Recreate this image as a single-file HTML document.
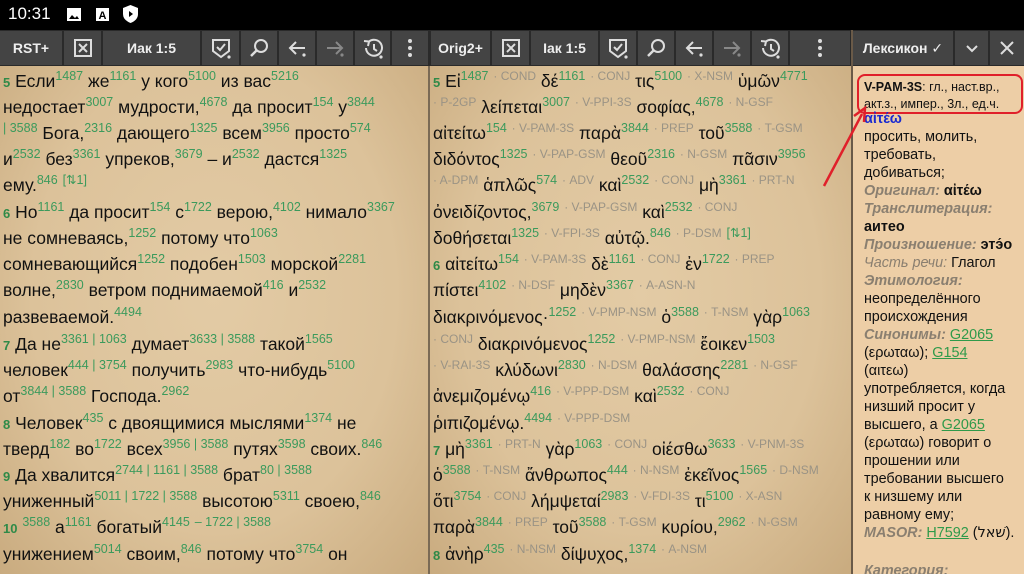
<!DOCTYPE html>
<html><head><meta charset="utf-8">
<style>
*{margin:0;padding:0;box-sizing:border-box}
body{width:1024px;height:574px;overflow:hidden;background:#000;font-family:"Liberation Sans","DejaVu Sans",sans-serif;position:relative}
#status{position:absolute;left:0;top:0;width:1024px;height:30px;background:#000;color:#fff;font-size:17px}
#tb{position:absolute;left:0;top:30px;width:1024px;height:36px;background:#2a2a2a}
.bt{position:absolute;top:1px;height:34px;background:#444;color:#eee;font-weight:bold;font-size:14px;display:flex;align-items:center;justify-content:center}
.bt svg{width:24px;height:24px}
.pane{position:absolute;top:66px;height:508px;overflow:hidden}
#lp{left:0;width:428px;background:radial-gradient(ellipse at 50% 45%,#e3cba5 0%,#dcc29a 60%,#c9ab7f 100%)}
#mp{left:430px;width:421px;background:radial-gradient(ellipse at 50% 45%,#e3cba5 0%,#dcc29a 60%,#c9ab7f 100%)}
#div1{position:absolute;left:428px;top:66px;width:2px;height:508px;background:#7a6a55}
#div2{position:absolute;left:851px;top:30px;width:2px;height:544px;background:#6a5a48}
#rp{left:853px;width:171px;background:#edcea6;color:#111;font-size:14.4px;line-height:18px;padding-left:11px}
.ln{position:absolute;left:3px;white-space:nowrap;font-size:17.5px;color:#111;height:26px;line-height:28px}
#mp .ln{font-size:17.5px;left:3px}
sup{font-size:12.5px;color:#3b9a5c;vertical-align:7px;line-height:0}
#mp sup{font-size:12.5px}
b.v{color:#2f8a48;font-size:13px;font-weight:bold}
em{font-style:normal;color:#9a9385;font-size:12px;vertical-align:7px;line-height:0}
.rl{position:absolute;left:11px;white-space:nowrap}
.g{color:#8a7f70;font-style:italic;font-weight:bold}
.lk{color:#2f9a4a;text-decoration:underline}
</style></head><body>
<div id="status">
<span style="position:absolute;left:8px;top:4px">10:31</span>
<svg style="position:absolute;left:67px;top:8px" width="14" height="13"><rect x="0" y="0" width="14" height="13" fill="#fff"/><path d="M2 11 L5 7 L8 10 L10 8 L12 11Z" fill="#000"/></svg>
<svg style="position:absolute;left:96px;top:8px" width="13" height="13"><rect x="0" y="0" width="13" height="13" fill="#fff"/><text x="6.5" y="11" font-size="11" text-anchor="middle" font-weight="bold" fill="#000" font-family="Liberation Sans">A</text></svg>
<svg style="position:absolute;left:123px;top:5px" width="15" height="18"><path d="M7.5 0 L15 3 L15 9 Q15 15 7.5 18 Q0 15 0 9 L0 3Z" fill="#fff"/><path d="M6 6 L10 9 L6 12Z" fill="#000"/></svg>
</div>
<div id="tb">
<div class="bt" style="left:0;width:62px">RST+</div>
<div class="bt" style="left:64px;width:37px"><svg viewBox="0 0 24 24"><rect x="4" y="4" width="16" height="16" fill="none" stroke="#ddd" stroke-width="2"/><path d="M8 8L16 16M16 8L8 16" stroke="#ddd" stroke-width="2"/></svg></div>
<div class="bt" style="left:103px;width:97px">Иак 1:5</div>
<div class="bt" style="left:202px;width:37px"><svg viewBox="0 0 24 24"><path d="M4 4H20V15L12 21L4 15Z" fill="none" stroke="#ddd" stroke-width="2"/><path d="M8 11L11 14L16 8" fill="none" stroke="#ddd" stroke-width="2"/><circle cx="20" cy="21" r="1.6" fill="#ddd"/></svg></div>
<div class="bt" style="left:241px;width:36px"><svg viewBox="0 0 24 24"><circle cx="14" cy="10" r="6" fill="none" stroke="#ddd" stroke-width="2"/><path d="M9.5 14.5L4 20" stroke="#ddd" stroke-width="2.5"/></svg></div>
<div class="bt" style="left:279px;width:36px"><svg viewBox="0 0 24 24"><path d="M20 12H5M11 6L5 12L11 18" fill="none" stroke="#ddd" stroke-width="2"/><circle cx="19" cy="19" r="1.6" fill="#ddd"/></svg></div>
<div class="bt" style="left:317px;width:36px"><svg viewBox="0 0 24 24"><path d="M4 12H19M13 6L19 12L13 18" fill="none" stroke="#888" stroke-width="2"/><circle cx="19" cy="19" r="1.6" fill="#888"/></svg></div>
<div class="bt" style="left:355px;width:35px"><svg viewBox="0 0 24 24"><path d="M5 12A8 8 0 1 0 8 5.5" fill="none" stroke="#ddd" stroke-width="2"/><path d="M3 5L8 5.5L7 10" fill="none" stroke="#ddd" stroke-width="2"/><path d="M13 8V13L16 15" fill="none" stroke="#ddd" stroke-width="2"/><circle cx="20" cy="21" r="1.6" fill="#ddd"/></svg></div>
<div class="bt" style="left:392px;width:36px"><svg viewBox="0 0 24 24"><circle cx="12" cy="5" r="2" fill="#ddd"/><circle cx="12" cy="12" r="2" fill="#ddd"/><circle cx="12" cy="19" r="2" fill="#ddd"/></svg></div>
<div class="bt" style="left:431px;width:59px">Orig2+</div>
<div class="bt" style="left:492px;width:37px"><svg viewBox="0 0 24 24"><rect x="4" y="4" width="16" height="16" fill="none" stroke="#ddd" stroke-width="2"/><path d="M8 8L16 16M16 8L8 16" stroke="#ddd" stroke-width="2"/></svg></div>
<div class="bt" style="left:531px;width:67px">Іак 1:5</div>
<div class="bt" style="left:600px;width:36px"><svg viewBox="0 0 24 24"><path d="M4 4H20V15L12 21L4 15Z" fill="none" stroke="#ddd" stroke-width="2"/><path d="M8 11L11 14L16 8" fill="none" stroke="#ddd" stroke-width="2"/><circle cx="20" cy="21" r="1.6" fill="#ddd"/></svg></div>
<div class="bt" style="left:638px;width:36px"><svg viewBox="0 0 24 24"><circle cx="14" cy="10" r="6" fill="none" stroke="#ddd" stroke-width="2"/><path d="M9.5 14.5L4 20" stroke="#ddd" stroke-width="2.5"/></svg></div>
<div class="bt" style="left:676px;width:36px"><svg viewBox="0 0 24 24"><path d="M20 12H5M11 6L5 12L11 18" fill="none" stroke="#ddd" stroke-width="2"/><circle cx="19" cy="19" r="1.6" fill="#ddd"/></svg></div>
<div class="bt" style="left:714px;width:36px"><svg viewBox="0 0 24 24"><path d="M4 12H19M13 6L19 12L13 18" fill="none" stroke="#888" stroke-width="2"/><circle cx="19" cy="19" r="1.6" fill="#888"/></svg></div>
<div class="bt" style="left:752px;width:36px"><svg viewBox="0 0 24 24"><path d="M5 12A8 8 0 1 0 8 5.5" fill="none" stroke="#ddd" stroke-width="2"/><path d="M3 5L8 5.5L7 10" fill="none" stroke="#ddd" stroke-width="2"/><path d="M13 8V13L16 15" fill="none" stroke="#ddd" stroke-width="2"/><circle cx="20" cy="21" r="1.6" fill="#ddd"/></svg></div>
<div class="bt" style="left:790px;width:60px"><svg viewBox="0 0 24 24"><circle cx="12" cy="5" r="2" fill="#ddd"/><circle cx="12" cy="12" r="2" fill="#ddd"/><circle cx="12" cy="19" r="2" fill="#ddd"/></svg></div>
<div class="bt" style="left:853px;width:100px">Лексикон ✓</div>
<div class="bt" style="left:955px;width:33px"><svg viewBox="0 0 24 24"><path d="M7 10L12 15L17 10" fill="none" stroke="#ddd" stroke-width="2"/></svg></div>
<div class="bt" style="left:990px;width:34px"><svg viewBox="0 0 24 24"><path d="M6 6L18 18M18 6L6 18" stroke="#ddd" stroke-width="2"/></svg></div>
</div>

<div id="lp" class="pane">
<div class="ln" style="top:1px"><b class="v">5</b> Если<sup>1487</sup> же<sup>1161</sup> у кого<sup>5100</sup> из вас<sup>5216</sup></div>
<div class="ln" style="top:27px">недостает<sup>3007</sup> мудрости,<sup>4678</sup> да просит<sup>154</sup> у<sup>3844</sup></div>
<div class="ln" style="top:53px"><sup>| 3588</sup> Бога,<sup>2316</sup> дающего<sup>1325</sup> всем<sup>3956</sup> просто<sup>574</sup></div>
<div class="ln" style="top:79px">и<sup>2532</sup> без<sup>3361</sup> упреков,<sup>3679</sup> – и<sup>2532</sup> дастся<sup>1325</sup></div>
<div class="ln" style="top:105px">ему.<sup>846</sup> <sup>[⇅1]</sup></div>
<div class="ln" style="top:132px"><b class="v">6</b> Но<sup>1161</sup> да просит<sup>154</sup> с<sup>1722</sup> верою,<sup>4102</sup> нимало<sup>3367</sup></div>
<div class="ln" style="top:158px">не сомневаясь,<sup>1252</sup> потому что<sup>1063</sup></div>
<div class="ln" style="top:184px">сомневающийся<sup>1252</sup> подобен<sup>1503</sup> морской<sup>2281</sup></div>
<div class="ln" style="top:210px">волне,<sup>2830</sup> ветром поднимаемой<sup>416</sup> и<sup>2532</sup></div>
<div class="ln" style="top:237px">развеваемой.<sup>4494</sup></div>
<div class="ln" style="top:264px"><b class="v">7</b> Да не<sup>3361 | 1063</sup> думает<sup>3633 | 3588</sup> такой<sup>1565</sup></div>
<div class="ln" style="top:290px">человек<sup>444 | 3754</sup> получить<sup>2983</sup> что-нибудь<sup>5100</sup></div>
<div class="ln" style="top:316px">от<sup>3844 | 3588</sup> Господа.<sup>2962</sup></div>
<div class="ln" style="top:343px"><b class="v">8</b> Человек<sup>435</sup> с двоящимися мыслями<sup>1374</sup> не</div>
<div class="ln" style="top:369px">тверд<sup>182</sup> во<sup>1722</sup> всех<sup>3956 | 3588</sup> путях<sup>3598</sup> своих.<sup>846</sup></div>
<div class="ln" style="top:395px"><b class="v">9</b> Да хвалится<sup>2744 | 1161 | 3588</sup> брат<sup>80 | 3588</sup></div>
<div class="ln" style="top:421px">униженный<sup>5011 | 1722 | 3588</sup> высотою<sup>5311</sup> своею,<sup>846</sup></div>
<div class="ln" style="top:447px"><b class="v">10</b> <sup>3588</sup> а<sup>1161</sup> богатый<sup>4145</sup> <sup>– 1722 | 3588</sup></div>
<div class="ln" style="top:474px">унижением<sup>5014</sup> своим,<sup>846</sup> потому что<sup>3754</sup> он</div>
</div>
<div id="div1"></div>
<div id="mp" class="pane">
<div class="ln" style="top:1px"><b class="v">5</b> Εἰ<sup>1487</sup> <em>· COND</em> δέ<sup>1161</sup> <em>· CONJ</em> τις<sup>5100</sup> <em>· X-NSM</em> ὑμῶν<sup>4771</sup></div>
<div class="ln" style="top:27px"><em>· P-2GP</em> λείπεται<sup>3007</sup> <em>· V-PPI-3S</em> σοφίας,<sup>4678</sup> <em>· N-GSF</em></div>
<div class="ln" style="top:53px">αἰτείτω<sup>154</sup> <em>· V-PAM-3S</em> παρὰ<sup>3844</sup> <em>· PREP</em> τοῦ<sup>3588</sup> <em>· T-GSM</em></div>
<div class="ln" style="top:79px">διδόντος<sup>1325</sup> <em>· V-PAP-GSM</em> θεοῦ<sup>2316</sup> <em>· N-GSM</em> πᾶσιν<sup>3956</sup></div>
<div class="ln" style="top:105px"><em>· A-DPM</em> ἁπλῶς<sup>574</sup> <em>· ADV</em> καὶ<sup>2532</sup> <em>· CONJ</em> μὴ<sup>3361</sup> <em>· PRT-N</em></div>
<div class="ln" style="top:132px">ὀνειδίζοντος,<sup>3679</sup> <em>· V-PAP-GSM</em> καὶ<sup>2532</sup> <em>· CONJ</em></div>
<div class="ln" style="top:158px">δοθήσεται<sup>1325</sup> <em>· V-FPI-3S</em> αὐτῷ.<sup>846</sup> <em>· P-DSM</em> <sup>[⇅1]</sup></div>
<div class="ln" style="top:184px"><b class="v">6</b> αἰτείτω<sup>154</sup> <em>· V-PAM-3S</em> δὲ<sup>1161</sup> <em>· CONJ</em> ἐν<sup>1722</sup> <em>· PREP</em></div>
<div class="ln" style="top:210px">πίστει<sup>4102</sup> <em>· N-DSF</em> μηδὲν<sup>3367</sup> <em>· A-ASN-N</em></div>
<div class="ln" style="top:237px">διακρινόμενος·<sup>1252</sup> <em>· V-PMP-NSM</em> ὁ<sup>3588</sup> <em>· T-NSM</em> γὰρ<sup>1063</sup></div>
<div class="ln" style="top:264px"><em>· CONJ</em> διακρινόμενος<sup>1252</sup> <em>· V-PMP-NSM</em> ἔοικεν<sup>1503</sup></div>
<div class="ln" style="top:290px"><em>· V-RAI-3S</em> κλύδωνι<sup>2830</sup> <em>· N-DSM</em> θαλάσσης<sup>2281</sup> <em>· N-GSF</em></div>
<div class="ln" style="top:316px">ἀνεμιζομένῳ<sup>416</sup> <em>· V-PPP-DSM</em> καὶ<sup>2532</sup> <em>· CONJ</em></div>
<div class="ln" style="top:343px">ῥιπιζομένῳ.<sup>4494</sup> <em>· V-PPP-DSM</em></div>
<div class="ln" style="top:369px"><b class="v">7</b> μὴ<sup>3361</sup> <em>· PRT-N</em> γὰρ<sup>1063</sup> <em>· CONJ</em> οἰέσθω<sup>3633</sup> <em>· V-PNM-3S</em></div>
<div class="ln" style="top:395px">ὁ<sup>3588</sup> <em>· T-NSM</em> ἄνθρωπος<sup>444</sup> <em>· N-NSM</em> ἐκεῖνος<sup>1565</sup> <em>· D-NSM</em></div>
<div class="ln" style="top:421px">ὅτι<sup>3754</sup> <em>· CONJ</em> λήμψεταί<sup>2983</sup> <em>· V-FDI-3S</em> τι<sup>5100</sup> <em>· X-ASN</em></div>
<div class="ln" style="top:447px">παρὰ<sup>3844</sup> <em>· PREP</em> τοῦ<sup>3588</sup> <em>· T-GSM</em> κυρίου,<sup>2962</sup> <em>· N-GSM</em></div>
<div class="ln" style="top:474px"><b class="v">8</b> ἀνὴρ<sup>435</sup> <em>· N-NSM</em> δίψυχος,<sup>1374</sup> <em>· A-NSM</em></div>
</div>
<div id="div2"></div>
<div id="rp" class="pane">
<div class="rl" style="top:12px;font-size:12.5px"><b>V-PAM-3S</b>: гл., наст.вр.,</div>
<div class="rl" style="top:29px;font-size:12.5px">акт.з., импер., 3л., ед.ч.</div>
<div style="position:absolute;left:4px;top:8px;width:166px;height:40px;border:2.5px solid #e0202a;border-radius:8px"></div>
<div class="rl" style="top:44px;color:#1a2ad0;font-weight:bold">αἰτέω</div>
<div class="rl" style="top:62px">просить, молить,</div>
<div class="rl" style="top:80px">требовать,</div>
<div class="rl" style="top:98px">добиваться;</div>
<div class="rl" style="top:116px"><span class="g">Оригинал:</span> <b>αἰτέω</b></div>
<div class="rl" style="top:134px"><span class="g">Транслитерация:</span></div>
<div class="rl" style="top:152px"><b>аитео</b></div>
<div class="rl" style="top:170px"><span class="g">Произношение:</span> <b>этэ́о</b></div>
<div class="rl" style="top:188px"><span class="g" style="font-weight:normal">Часть речи:</span> Глагол</div>
<div class="rl" style="top:206px"><span class="g">Этимология:</span></div>
<div class="rl" style="top:224px">неопределённого</div>
<div class="rl" style="top:242px">происхождения</div>
<div class="rl" style="top:260px"><span class="g">Синонимы:</span> <span class="lk">G2065</span></div>
<div class="rl" style="top:278px">(ερωταω); <span class="lk">G154</span></div>
<div class="rl" style="top:296px">(αιτεω)</div>
<div class="rl" style="top:314px">употребляется, когда</div>
<div class="rl" style="top:332px">низший просит у</div>
<div class="rl" style="top:350px">высшего, а <span class="lk">G2065</span></div>
<div class="rl" style="top:368px">(ερωταω) говорит о</div>
<div class="rl" style="top:386px">прошении или</div>
<div class="rl" style="top:404px">требовании высшего</div>
<div class="rl" style="top:422px">к низшему или</div>
<div class="rl" style="top:440px">равному ему;</div>
<div class="rl" style="top:458px"><span class="g">MASOR:</span> <span class="lk">H7592</span> (<span style="font-family:'DejaVu Sans',sans-serif">שׁאל</span>).</div>
<div class="rl" style="top:496px"><span class="g">Категория:</span></div>
</div>
<svg style="position:absolute;left:810px;top:100px" width="60" height="90"><path d="M14 86 L52 14" stroke="#e0202a" stroke-width="2.5" fill="none"/><path d="M44 16 L55 8 L54 22" stroke="#e0202a" stroke-width="2.5" fill="none"/></svg>
</body></html>
